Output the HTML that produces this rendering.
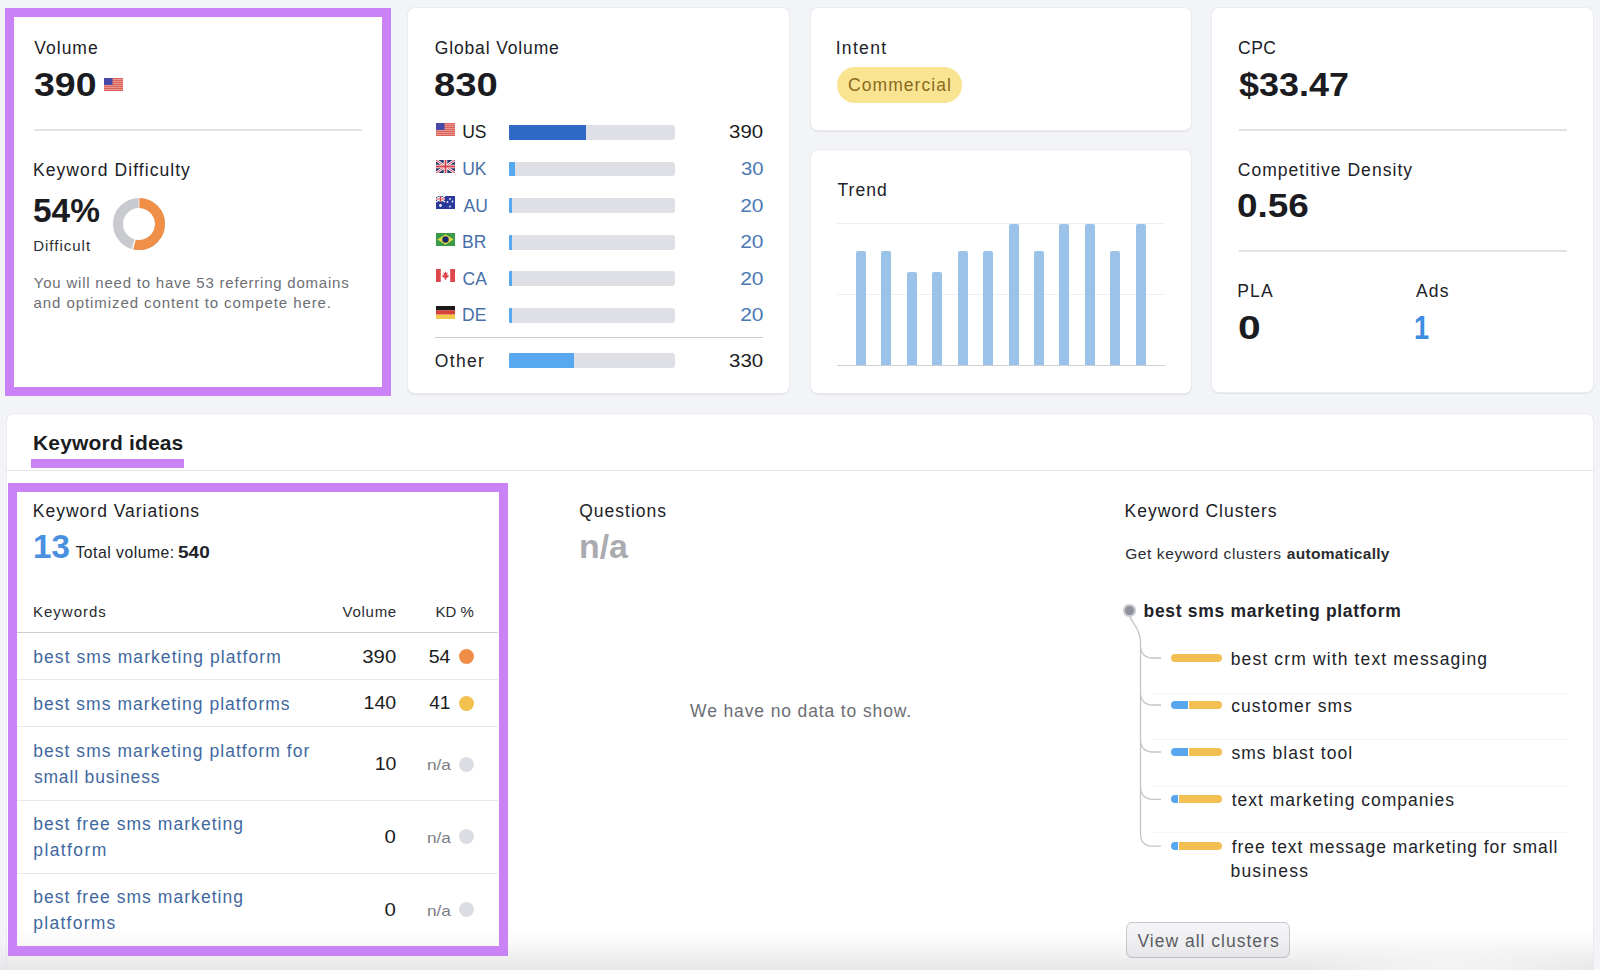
<!DOCTYPE html>
<html><head><meta charset="utf-8"><title>Keyword Overview</title>
<style>
html,body{margin:0;padding:0;}
body{width:1600px;height:970px;overflow:hidden;position:relative;background:#f3f4f8;font-family:"Liberation Sans",sans-serif;}
.a{position:absolute;box-sizing:border-box;}
.t{position:absolute;white-space:nowrap;-webkit-text-stroke:0;}
.t b,.bd{-webkit-text-stroke:0;}
.card{position:absolute;background:#fff;border-radius:7px;box-shadow:0 0 0 1px #eaebef,0 1px 0 1px #e2e3e8;}
</style></head><body>
<div class="a" style="left:5.00px;top:8.00px;width:386.00px;height:388.00px;background:#fff;border:9px solid #c983f6;"></div><div class="t" style="left:34.31px;top:37.34px;font-size:17.5px;line-height:22px;font-weight:400;color:#202126;letter-spacing:1.002px;">Volume</div><div class="t bd" style="left:34.06px;top:64.54px;font-size:32.5px;line-height:41px;font-weight:700;color:#1b1c21;transform:scaleX(1.1538);transform-origin:left;">390</div><svg style="position:absolute;left:104px;top:78.2px" width="19" height="13" viewBox="0 0 19 13"><rect width="19" height="13" fill="#eea39c"/><rect y="0.00" width="19" height="1.2" fill="#da625b"/><rect y="2.00" width="19" height="1.2" fill="#da625b"/><rect y="4.00" width="19" height="1.2" fill="#da625b"/><rect y="6.00" width="19" height="1.2" fill="#da625b"/><rect y="8.00" width="19" height="1.2" fill="#da625b"/><rect y="10.00" width="19" height="1.2" fill="#da625b"/><rect y="12.00" width="19" height="1.2" fill="#da625b"/><rect width="8.5" height="7" fill="#4848a8"/></svg><div class="a" style="left:34.00px;top:129.00px;width:328.00px;height:2.00px;background:#e1e2e6;"></div><div class="t" style="left:33.00px;top:159.19px;font-size:17.5px;line-height:22px;font-weight:400;color:#202126;letter-spacing:1.066px;">Keyword Difficulty</div><div class="t bd" style="left:33.40px;top:190.84px;font-size:32.5px;line-height:41px;font-weight:700;color:#1b1c21;transform:scaleX(1.0283);transform-origin:left;">54%</div><svg style="position:absolute;left:112.5px;top:198px" width="52" height="52" viewBox="0 0 52 52"><circle cx="26" cy="26" r="21" fill="none" stroke="#c8cad0" stroke-width="10"/><circle cx="26" cy="26" r="21" fill="none" stroke="#ef8f48" stroke-width="10" stroke-dasharray="71.25 131.95" transform="rotate(-90 26 26)"/><path d="M26,-1V11" stroke="#fff" stroke-width="0.7"/><path d="M22.27,40.53L19.29,52.15" stroke="#fff" stroke-width="1.4"/></svg><div class="t" style="left:33.20px;top:235.90px;font-size:15px;line-height:19px;font-weight:400;color:#2a2b30;letter-spacing:0.997px;">Difficult</div><div class="t" style="left:33.83px;top:272.60px;font-size:15px;line-height:19px;font-weight:400;color:#6c6e74;letter-spacing:0.779px;">You will need to have 53 referring domains</div><div class="t" style="left:33.60px;top:293.30px;font-size:15px;line-height:19px;font-weight:400;color:#6c6e74;letter-spacing:0.916px;">and optimized content to compete here.</div><div class="card" style="left:408.3px;top:8.2px;width:380.49999999999994px;height:385.3px;"></div><div class="t" style="left:434.73px;top:37.34px;font-size:17.5px;line-height:22px;font-weight:400;color:#202126;letter-spacing:0.860px;">Global Volume</div><div class="t bd" style="left:434.45px;top:64.54px;font-size:32.5px;line-height:41px;font-weight:700;color:#1b1c21;transform:scaleX(1.1768);transform-origin:left;">830</div><svg style="position:absolute;left:436px;top:123.0px" width="19" height="13" viewBox="0 0 19 13"><rect width="19" height="13" fill="#eea39c"/><rect y="0.00" width="19" height="1.2" fill="#da625b"/><rect y="2.00" width="19" height="1.2" fill="#da625b"/><rect y="4.00" width="19" height="1.2" fill="#da625b"/><rect y="6.00" width="19" height="1.2" fill="#da625b"/><rect y="8.00" width="19" height="1.2" fill="#da625b"/><rect y="10.00" width="19" height="1.2" fill="#da625b"/><rect y="12.00" width="19" height="1.2" fill="#da625b"/><rect width="8.5" height="7" fill="#4848a8"/></svg><div class="t" style="left:462.19px;top:121.44px;font-size:17.5px;line-height:22px;font-weight:400;color:#1b1c21;">US</div><div class="a" style="left:508.75px;top:125.00px;width:166.00px;height:14.75px;background:#dfe0e6;border-radius:1px 3px 3px 1px;"></div><div class="a" style="left:508.75px;top:125.00px;width:77.25px;height:14.75px;background:#2f6bc6;border-radius:1px 0 0 1px;"></div><div class="t" style="right:836.71px;top:121.44px;font-size:17.5px;line-height:22px;font-weight:400;color:#1b1c21;transform:scaleX(1.1680);transform-origin:right;">390</div><svg style="position:absolute;left:436px;top:159.6px" width="19" height="13" viewBox="0 0 19 13"><rect width="19" height="13" fill="#27356e"/><path d="M0,0L19,13M19,0L0,13" stroke="#fff" stroke-width="2.6"/><path d="M0,0L19,13M19,0L0,13" stroke="#d6404a" stroke-width="1"/><path d="M9.5,0V13M0,6.5H19" stroke="#fff" stroke-width="3.6"/><path d="M9.5,0V13M0,6.5H19" stroke="#d6404a" stroke-width="1.8"/></svg><div class="t" style="left:462.19px;top:158.04px;font-size:17.5px;line-height:22px;font-weight:400;color:#4870a8;">UK</div><div class="a" style="left:508.75px;top:161.60px;width:166.00px;height:14.75px;background:#dfe0e6;border-radius:1px 3px 3px 1px;"></div><div class="a" style="left:508.75px;top:161.60px;width:5.80px;height:14.75px;background:#58a8f0;border-radius:1px 0 0 1px;"></div><div class="t" style="right:836.74px;top:158.04px;font-size:17.5px;line-height:22px;font-weight:400;color:#4a78b5;transform:scaleX(1.1594);transform-origin:right;">30</div><svg style="position:absolute;left:436px;top:196.2px" width="19" height="13" viewBox="0 0 19 13"><rect width="19" height="13" fill="#2a3a9a"/><rect width="9" height="6" fill="#27356e"/><path d="M0,0L9,6M9,0L0,6" stroke="#fff" stroke-width="1.3"/><path d="M4.5,0V6M0,3H9" stroke="#fff" stroke-width="2"/><path d="M4.5,0V6M0,3H9" stroke="#d6404a" stroke-width="1"/><circle cx="4.5" cy="9.5" r="1.4" fill="#e8ecf8"/><circle cx="14" cy="3" r="0.9" fill="#e8ecf8"/><circle cx="11.5" cy="6" r="0.9" fill="#e8ecf8"/><circle cx="16.5" cy="5.5" r="0.9" fill="#e8ecf8"/><circle cx="14" cy="10.5" r="0.9" fill="#e8ecf8"/></svg><div class="t" style="left:463.50px;top:194.64px;font-size:17.5px;line-height:22px;font-weight:400;color:#4870a8;">AU</div><div class="a" style="left:508.75px;top:198.20px;width:166.00px;height:14.75px;background:#dfe0e6;border-radius:1px 3px 3px 1px;"></div><div class="a" style="left:508.75px;top:198.20px;width:3.60px;height:14.75px;background:#58a8f0;border-radius:1px 0 0 1px;"></div><div class="t" style="right:836.72px;top:194.64px;font-size:17.5px;line-height:22px;font-weight:400;color:#4a78b5;transform:scaleX(1.1986);transform-origin:right;">20</div><svg style="position:absolute;left:436px;top:232.8px" width="19" height="13" viewBox="0 0 19 13"><rect width="19" height="13" fill="#3b9a48"/><path d="M9.5,1.3L17.6,6.5L9.5,11.7L1.4,6.5Z" fill="#e9d84a"/><circle cx="9.5" cy="6.5" r="3.2" fill="#1c2a6a"/></svg><div class="t" style="left:462.10px;top:231.24px;font-size:17.5px;line-height:22px;font-weight:400;color:#4870a8;">BR</div><div class="a" style="left:508.75px;top:234.80px;width:166.00px;height:14.75px;background:#dfe0e6;border-radius:1px 3px 3px 1px;"></div><div class="a" style="left:508.75px;top:234.80px;width:3.60px;height:14.75px;background:#58a8f0;border-radius:1px 0 0 1px;"></div><div class="t" style="right:836.72px;top:231.24px;font-size:17.5px;line-height:22px;font-weight:400;color:#4a78b5;transform:scaleX(1.1986);transform-origin:right;">20</div><svg style="position:absolute;left:436px;top:269.4px" width="19" height="13" viewBox="0 0 19 13"><rect width="19" height="13" fill="#fff"/><rect width="4.8" height="13" fill="#e0474c"/><rect x="14.2" width="4.8" height="13" fill="#e0474c"/><path d="M9.5,2.2L10.3,4L11.6,3.6L11,6.6L12.6,5.6L12.3,7.2L13,7.6L10.2,9.2L10.3,10.8H8.7L8.8,9.2L6,7.6L6.7,7.2L6.4,5.6L8,6.6L7.4,3.6L8.7,4Z" fill="#e0474c"/></svg><div class="t" style="left:462.62px;top:267.84px;font-size:17.5px;line-height:22px;font-weight:400;color:#4870a8;">CA</div><div class="a" style="left:508.75px;top:271.40px;width:166.00px;height:14.75px;background:#dfe0e6;border-radius:1px 3px 3px 1px;"></div><div class="a" style="left:508.75px;top:271.40px;width:3.60px;height:14.75px;background:#58a8f0;border-radius:1px 0 0 1px;"></div><div class="t" style="right:836.72px;top:267.84px;font-size:17.5px;line-height:22px;font-weight:400;color:#4a78b5;transform:scaleX(1.1986);transform-origin:right;">20</div><svg style="position:absolute;left:436px;top:306.0px" width="19" height="13" viewBox="0 0 19 13"><rect width="19" height="4.4" fill="#1a1a1a"/><rect y="4.3" width="19" height="4.4" fill="#d8413a"/><rect y="8.6" width="19" height="4.4" fill="#f2c94c"/></svg><div class="t" style="left:462.10px;top:304.44px;font-size:17.5px;line-height:22px;font-weight:400;color:#4870a8;">DE</div><div class="a" style="left:508.75px;top:308.00px;width:166.00px;height:14.75px;background:#dfe0e6;border-radius:1px 3px 3px 1px;"></div><div class="a" style="left:508.75px;top:308.00px;width:3.60px;height:14.75px;background:#58a8f0;border-radius:1px 0 0 1px;"></div><div class="t" style="right:836.72px;top:304.44px;font-size:17.5px;line-height:22px;font-weight:400;color:#4a78b5;transform:scaleX(1.1986);transform-origin:right;">20</div><div class="a" style="left:435.00px;top:336.50px;width:327.50px;height:1.50px;background:#c9cbd0;"></div><div class="t" style="left:434.81px;top:349.84px;font-size:17.5px;line-height:22px;font-weight:400;color:#202126;letter-spacing:1.325px;">Other</div><div class="a" style="left:508.75px;top:353.00px;width:166.00px;height:14.75px;background:#dfe0e6;border-radius:1px 3px 3px 1px;"></div><div class="a" style="left:508.75px;top:353.00px;width:65.25px;height:14.75px;background:#58a8f0;border-radius:1px 0 0 1px;"></div><div class="t" style="right:836.71px;top:349.84px;font-size:17.5px;line-height:22px;font-weight:400;color:#1b1c21;transform:scaleX(1.1680);transform-origin:right;">330</div><div class="card" style="left:810.6px;top:8.2px;width:380.69999999999993px;height:121.39999999999999px;"></div><div class="t" style="left:835.67px;top:37.34px;font-size:17.5px;line-height:22px;font-weight:400;color:#202126;letter-spacing:1.333px;">Intent</div><div class="a" style="left:837.00px;top:66.60px;width:125.00px;height:36.00px;background:#f8e491;border-radius:18px;"></div><div class="t" style="left:848.12px;top:74.19px;font-size:17.5px;line-height:22px;font-weight:400;color:#8b6a1e;letter-spacing:1.038px;">Commercial</div><div class="card" style="left:810.6px;top:149.6px;width:380.69999999999993px;height:243.9px;"></div><div class="t" style="left:837.40px;top:178.94px;font-size:17.5px;line-height:22px;font-weight:400;color:#202126;letter-spacing:1.069px;">Trend</div><div class="a" style="left:836.75px;top:223.00px;width:328.50px;height:1.00px;background:#eeeff2;"></div><div class="a" style="left:836.75px;top:294.30px;width:328.50px;height:1.00px;background:#eeeff2;"></div><div class="a" style="left:856.00px;top:251.00px;width:10.00px;height:114.70px;background:#9bc3ea;border-radius:2px 2px 0 0;"></div><div class="a" style="left:881.42px;top:251.00px;width:10.00px;height:114.70px;background:#9bc3ea;border-radius:2px 2px 0 0;"></div><div class="a" style="left:906.84px;top:272.00px;width:10.00px;height:93.70px;background:#9bc3ea;border-radius:2px 2px 0 0;"></div><div class="a" style="left:932.26px;top:272.00px;width:10.00px;height:93.70px;background:#9bc3ea;border-radius:2px 2px 0 0;"></div><div class="a" style="left:957.68px;top:251.00px;width:10.00px;height:114.70px;background:#9bc3ea;border-radius:2px 2px 0 0;"></div><div class="a" style="left:983.10px;top:251.00px;width:10.00px;height:114.70px;background:#9bc3ea;border-radius:2px 2px 0 0;"></div><div class="a" style="left:1008.52px;top:223.50px;width:10.00px;height:142.20px;background:#9bc3ea;border-radius:2px 2px 0 0;"></div><div class="a" style="left:1033.94px;top:251.00px;width:10.00px;height:114.70px;background:#9bc3ea;border-radius:2px 2px 0 0;"></div><div class="a" style="left:1059.36px;top:223.50px;width:10.00px;height:142.20px;background:#9bc3ea;border-radius:2px 2px 0 0;"></div><div class="a" style="left:1084.78px;top:223.50px;width:10.00px;height:142.20px;background:#9bc3ea;border-radius:2px 2px 0 0;"></div><div class="a" style="left:1110.20px;top:251.00px;width:10.00px;height:114.70px;background:#9bc3ea;border-radius:2px 2px 0 0;"></div><div class="a" style="left:1135.62px;top:223.50px;width:10.00px;height:142.20px;background:#9bc3ea;border-radius:2px 2px 0 0;"></div><div class="a" style="left:836.75px;top:364.90px;width:328.50px;height:1.60px;background:#cfd0d4;"></div><div class="card" style="left:1212px;top:8.2px;width:381px;height:384.1px;"></div><div class="t" style="left:1238.12px;top:37.34px;font-size:17.5px;line-height:22px;font-weight:400;color:#202126;letter-spacing:0.406px;">CPC</div><div class="t bd" style="left:1238.86px;top:64.54px;font-size:32.5px;line-height:41px;font-weight:700;color:#1b1c21;transform:scaleX(1.1058);transform-origin:left;">$33.47</div><div class="a" style="left:1238.50px;top:129.00px;width:328.00px;height:2.00px;background:#e1e2e6;"></div><div class="t" style="left:1237.72px;top:159.24px;font-size:17.5px;line-height:22px;font-weight:400;color:#202126;letter-spacing:1.039px;">Competitive Density</div><div class="t bd" style="left:1237.12px;top:185.94px;font-size:32.5px;line-height:41px;font-weight:700;color:#1b1c21;transform:scaleX(1.1353);transform-origin:left;">0.56</div><div class="a" style="left:1238.50px;top:250.00px;width:328.00px;height:2.00px;background:#e1e2e6;"></div><div class="t" style="left:1237.20px;top:280.34px;font-size:17.5px;line-height:22px;font-weight:400;color:#202126;letter-spacing:1.263px;">PLA</div><div class="t bd" style="left:1237.67px;top:307.64px;font-size:32.5px;line-height:41px;font-weight:700;color:#1b1c21;transform:scaleX(1.2567);transform-origin:left;">0</div><div class="t" style="left:1415.90px;top:280.34px;font-size:17.5px;line-height:22px;font-weight:400;color:#202126;letter-spacing:1.263px;">Ads</div><div class="t bd" style="left:1414.37px;top:307.64px;font-size:32.5px;line-height:41px;font-weight:700;color:#3d8de2;transform:scaleX(0.8380);transform-origin:left;">1</div><div class="card" style="left:6.8px;top:414px;width:1586.2px;height:586px;"></div><div class="t bd" style="left:33.03px;top:429.72px;font-size:21px;line-height:26px;font-weight:700;color:#1b1c21;letter-spacing:0.171px;">Keyword ideas</div><div class="a" style="left:31.00px;top:459.00px;width:153.40px;height:8.75px;background:#c983f6;"></div><div class="a" style="left:7.00px;top:469.80px;width:1586.00px;height:1.00px;background:#e3e4e8;"></div><div class="a" style="left:16.00px;top:492.00px;width:483.00px;height:455.00px;background:#fff;"></div><div class="t" style="left:32.85px;top:499.94px;font-size:17.5px;line-height:22px;font-weight:400;color:#202126;letter-spacing:0.989px;">Keyword Variations</div><div class="t bd" style="left:32.71px;top:527.19px;font-size:32.5px;line-height:41px;font-weight:700;color:#4a8fe0;transform:scaleX(1.0186);transform-origin:left;">13</div><div class="t" style="left:75.48px;top:542.79px;font-size:15.75px;line-height:20px;font-weight:400;color:#222328;letter-spacing:0.489px;">Total volume:</div><div class="t bd" style="left:178.43px;top:542.79px;font-size:15.75px;line-height:20px;font-weight:700;color:#222328;transform:scaleX(1.2062);transform-origin:left;">540</div><div class="t" style="left:33.05px;top:602.05px;font-size:15px;line-height:19px;font-weight:400;color:#2a2b30;letter-spacing:0.982px;">Keywords</div><div class="t" style="right:1203.09px;top:602.00px;font-size:15px;line-height:19px;font-weight:400;color:#2a2b30;letter-spacing:0.725px;">Volume</div><div class="t" style="right:1126.32px;top:602.00px;font-size:15px;line-height:19px;font-weight:400;color:#2a2b30;letter-spacing:-0.067px;">KD %</div><div class="a" style="left:16.70px;top:631.50px;width:481.80px;height:1.60px;background:#cbcdd1;"></div><div class="a" style="left:16.70px;top:679.30px;width:481.80px;height:1.20px;background:#e6e7eb;"></div><div class="a" style="left:16.70px;top:726.20px;width:481.80px;height:1.20px;background:#e6e7eb;"></div><div class="a" style="left:16.70px;top:799.50px;width:481.80px;height:1.20px;background:#e6e7eb;"></div><div class="a" style="left:16.70px;top:872.60px;width:481.80px;height:1.20px;background:#e6e7eb;"></div><div class="t" style="left:33.26px;top:645.94px;font-size:17.5px;line-height:22px;font-weight:400;color:#3f68a0;letter-spacing:1.064px;">best sms marketing platform</div><div class="t" style="right:1203.72px;top:645.54px;font-size:17.5px;line-height:22px;font-weight:400;color:#1b1c21;transform:scaleX(1.1608);transform-origin:right;">390</div><div class="t" style="right:1149.57px;top:645.54px;font-size:17.5px;line-height:22px;font-weight:400;color:#1b1c21;transform:scaleX(1.1154);transform-origin:right;">54</div><div class="a" style="left:459.20px;top:649.00px;width:15.00px;height:15.00px;background:#ee8c48;border-radius:50%;"></div><div class="t" style="left:33.26px;top:692.94px;font-size:17.5px;line-height:22px;font-weight:400;color:#3f68a0;letter-spacing:1.030px;">best sms marketing platforms</div><div class="t" style="right:1203.74px;top:692.44px;font-size:17.5px;line-height:22px;font-weight:400;color:#1b1c21;transform:scaleX(1.1208);transform-origin:right;">140</div><div class="t" style="right:1149.29px;top:692.44px;font-size:17.5px;line-height:22px;font-weight:400;color:#1b1c21;transform:scaleX(1.0936);transform-origin:right;">41</div><div class="a" style="left:459.20px;top:695.50px;width:15.00px;height:15.00px;background:#f2c14e;border-radius:50%;"></div><div class="t" style="left:33.26px;top:739.94px;font-size:17.5px;line-height:22px;font-weight:400;color:#3f68a0;letter-spacing:1.033px;">best sms marketing platform for</div><div class="t" style="left:33.88px;top:765.94px;font-size:17.5px;line-height:22px;font-weight:400;color:#3f68a0;letter-spacing:0.834px;">small business</div><div class="t" style="right:1203.77px;top:752.94px;font-size:17.5px;line-height:22px;font-weight:400;color:#1b1c21;transform:scaleX(1.1143);transform-origin:right;">10</div><div class="t" style="right:1149.40px;top:755.30px;font-size:15px;line-height:19px;font-weight:400;color:#7b7d83;transform:scaleX(1.1472);transform-origin:right;">n/a</div><div class="a" style="left:459.40px;top:756.70px;width:15.00px;height:15.00px;background:#dcdde3;border-radius:50%;"></div><div class="t" style="left:33.26px;top:812.94px;font-size:17.5px;line-height:22px;font-weight:400;color:#3f68a0;letter-spacing:1.048px;">best free sms marketing</div><div class="t" style="left:33.26px;top:838.94px;font-size:17.5px;line-height:22px;font-weight:400;color:#3f68a0;letter-spacing:1.402px;">platform</div><div class="t" style="right:1203.86px;top:825.94px;font-size:17.5px;line-height:22px;font-weight:400;color:#1b1c21;transform:scaleX(1.1667);transform-origin:right;">0</div><div class="t" style="right:1149.40px;top:828.30px;font-size:15px;line-height:19px;font-weight:400;color:#7b7d83;transform:scaleX(1.1472);transform-origin:right;">n/a</div><div class="a" style="left:459.40px;top:829.20px;width:15.00px;height:15.00px;background:#dcdde3;border-radius:50%;"></div><div class="t" style="left:33.26px;top:885.94px;font-size:17.5px;line-height:22px;font-weight:400;color:#3f68a0;letter-spacing:1.048px;">best free sms marketing</div><div class="t" style="left:33.26px;top:911.94px;font-size:17.5px;line-height:22px;font-weight:400;color:#3f68a0;letter-spacing:1.266px;">platforms</div><div class="t" style="right:1203.86px;top:898.94px;font-size:17.5px;line-height:22px;font-weight:400;color:#1b1c21;transform:scaleX(1.1667);transform-origin:right;">0</div><div class="t" style="right:1149.40px;top:901.30px;font-size:15px;line-height:19px;font-weight:400;color:#7b7d83;transform:scaleX(1.1472);transform-origin:right;">n/a</div><div class="a" style="left:459.40px;top:902.30px;width:15.00px;height:15.00px;background:#dcdde3;border-radius:50%;"></div><div class="t" style="left:579.21px;top:499.74px;font-size:17.5px;line-height:22px;font-weight:400;color:#202126;letter-spacing:1.008px;">Questions</div><div class="t bd" style="left:578.60px;top:526.94px;font-size:32.5px;line-height:41px;font-weight:700;color:#a9abb1;transform:scaleX(1.0404);transform-origin:left;">n/a</div><div class="t" style="left:690.11px;top:699.94px;font-size:17.5px;line-height:22px;font-weight:400;color:#6c6e74;letter-spacing:0.868px;">We have no data to show.</div><div class="t" style="left:1124.60px;top:500.14px;font-size:17.5px;line-height:22px;font-weight:400;color:#202126;letter-spacing:0.993px;">Keyword Clusters</div><div class="t" style="left:1125.22px;top:544.13px;font-size:15.5px;line-height:19px;font-weight:400;color:#2a2b30;letter-spacing:0.586px;">Get keyword clusters</div><div class="t bd" style="left:1286.74px;top:544.13px;font-size:15.5px;line-height:19px;font-weight:700;color:#2a2b30;letter-spacing:0.308px;">automatically</div><div class="t bd" style="left:1143.56px;top:599.54px;font-size:17.5px;line-height:22px;font-weight:700;color:#222328;letter-spacing:0.691px;">best sms marketing platform</div><svg style="position:absolute;left:0px;top:0px" width="1600" height="970" viewBox="0 0 1600 970"><path d="M1130,616 C1132,624 1140.5,628 1140.5,642 L1140.5,834 M1140.5,645 Q1140.5,658 1153,658 L1161,658 M1140.5,692 Q1140.5,705 1153,705 L1161,705 M1140.5,739 Q1140.5,752 1153,752 L1161,752 M1140.5,786.3 Q1140.5,799.3 1153,799.3 L1161,799.3 M1140.5,833.2 Q1140.5,846.2 1153,846.2 L1161,846.2 " fill="none" stroke="#c3c5ca" stroke-width="1.3"/></svg><div class="a" style="left:1123.00px;top:604.40px;width:12.50px;height:12.50px;background:#8f919c;border:2px solid #cacbd2;border-radius:50%;"></div><div class="a" style="left:1150.00px;top:692.50px;width:418.00px;height:1.00px;background:#f6f6f8;"></div><div class="a" style="left:1150.00px;top:739.00px;width:418.00px;height:1.00px;background:#f6f6f8;"></div><div class="a" style="left:1150.00px;top:785.50px;width:418.00px;height:1.00px;background:#f6f6f8;"></div><div class="a" style="left:1150.00px;top:832.00px;width:418.00px;height:1.00px;background:#f6f6f8;"></div><div class="a" style="left:1170.60px;top:654.00px;width:51.70px;height:8.00px;background:#f2bf52;border-radius:4px;"></div><div class="t" style="left:1230.76px;top:647.54px;font-size:17.5px;line-height:22px;font-weight:400;color:#222328;letter-spacing:1.134px;">best crm with text messaging</div><div class="a" style="left:1170.60px;top:701.00px;width:17.10px;height:8.00px;background:#57a7ef;border-radius:4px 0 0 4px;"></div><div class="a" style="left:1189.20px;top:701.00px;width:33.10px;height:8.00px;background:#f2bf52;border-radius:0 4px 4px 0;"></div><div class="t" style="left:1231.20px;top:694.54px;font-size:17.5px;line-height:22px;font-weight:400;color:#222328;letter-spacing:1.080px;">customer sms</div><div class="a" style="left:1170.60px;top:748.00px;width:17.10px;height:8.00px;background:#57a7ef;border-radius:4px 0 0 4px;"></div><div class="a" style="left:1189.20px;top:748.00px;width:33.10px;height:8.00px;background:#f2bf52;border-radius:0 4px 4px 0;"></div><div class="t" style="left:1231.38px;top:741.54px;font-size:17.5px;line-height:22px;font-weight:400;color:#222328;letter-spacing:1.064px;">sms blast tool</div><div class="a" style="left:1170.60px;top:795.30px;width:7.30px;height:8.00px;background:#57a7ef;border-radius:4px 0 0 4px;"></div><div class="a" style="left:1179.40px;top:795.30px;width:42.90px;height:8.00px;background:#f2bf52;border-radius:0 4px 4px 0;"></div><div class="t" style="left:1231.64px;top:788.84px;font-size:17.5px;line-height:22px;font-weight:400;color:#222328;letter-spacing:0.994px;">text marketing companies</div><div class="a" style="left:1170.60px;top:842.20px;width:7.00px;height:8.00px;background:#57a7ef;border-radius:4px 0 0 4px;"></div><div class="a" style="left:1179.10px;top:842.20px;width:43.20px;height:8.00px;background:#f2bf52;border-radius:0 4px 4px 0;"></div><div class="t" style="left:1231.64px;top:835.74px;font-size:17.5px;line-height:22px;font-weight:400;color:#222328;letter-spacing:0.947px;">free text message marketing for small</div><div class="t" style="left:1230.46px;top:859.84px;font-size:17.5px;line-height:22px;font-weight:400;color:#222328;letter-spacing:1.202px;">business</div><div class="a" style="left:1125.60px;top:922.20px;width:164.00px;height:35.80px;background:#f4f4f6;border:1px solid #c9cacf;border-radius:6px;"></div><div class="t" style="left:1137.41px;top:929.94px;font-size:17.5px;line-height:22px;font-weight:400;color:#5c5e64;letter-spacing:1.005px;">View all clusters</div><div class="a" style="left:6.80px;top:926.00px;width:1586.20px;height:44.00px;background:linear-gradient(to bottom,rgba(40,40,50,0) 0%,rgba(40,40,50,0.025) 35%,rgba(40,40,50,0.11) 100%);"></div><div class="a" style="left:1250.00px;top:935.00px;width:343.00px;height:80.00px;background:radial-gradient(ellipse at 58% 75%,rgba(255,255,255,0.95),rgba(255,255,255,0) 60%);"></div><div class="a" style="left:0.00px;top:940.00px;width:6.80px;height:30.00px;background:linear-gradient(to bottom,rgba(40,40,50,0),rgba(40,40,50,0.06));"></div><div class="a" style="left:8.00px;top:483.00px;width:499.50px;height:473.40px;border:9px solid #c983f6;border-bottom-width:10px;"></div>
</body></html>
